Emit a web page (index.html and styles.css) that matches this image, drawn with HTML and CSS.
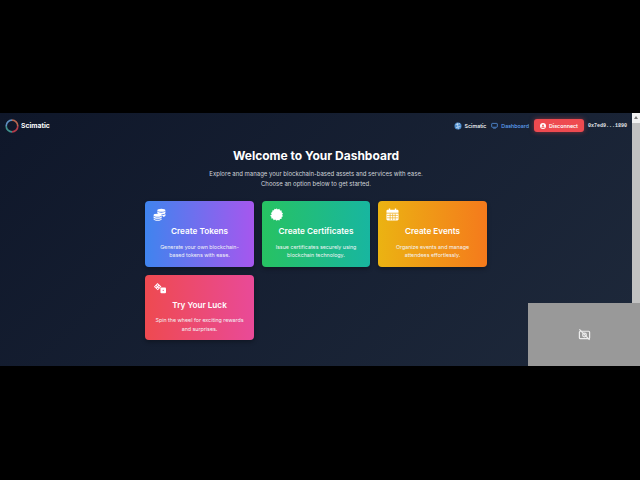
FILE: index.html
```html
<!DOCTYPE html>
<html lang="en">
<head>
    <meta charset="UTF-8">
    <title>Scimatic Dashboard</title>
    <link rel="stylesheet" href="styles.css">
</head>
<body>
    <div class="screen">
        <div class="page">
            <nav class="navbar">
                <div class="brand">
                    <svg class="brand-logo" viewBox="0 0 14 14" width="14" height="14">
                        <path d="M7 1.200A5.800 5.800 0 0 1 12.800 7" fill="none" stroke="#b5654f" stroke-width="1.700"/>
                        <path d="M12.800 7A5.800 5.800 0 0 1 7 12.800" fill="none" stroke="#b23b4a" stroke-width="1.700"/>
                        <path d="M7 12.800A5.800 5.800 0 0 1 1.200 7" fill="none" stroke="#3f8f8c" stroke-width="1.700"/>
                        <path d="M1.200 7A5.800 5.800 0 0 1 7 1.200" fill="none" stroke="#5f8fc0" stroke-width="1.700"/>
                    </svg>
                    <span>Scimatic</span>
                </div>
                <div class="nav-links">
                    <span class="nav-item">
                        <svg viewBox="0 0 10 10" width="8" height="8">
                            <circle cx="5" cy="5" r="4.400" fill="#4f8fd0"/>
                            <path d="M2 3.500 7.500 2M2.500 7 8 5.500M4 1 5.500 9" stroke="#dbe9f7" stroke-width="0.800" fill="none"/>
                        </svg>
                        <span>Scimatic</span>
                    </span>
                    <span class="nav-item nav-active">
                        <svg viewBox="0 0 10 10" width="7" height="7">
                            <rect x="1" y="2" width="8" height="5.500" rx="0.800" fill="none" stroke="#60a5fa" stroke-width="1"/>
                            <path d="M3 9h4" stroke="#60a5fa" stroke-width="0.800"/>
                        </svg>
                        <span>Dashboard</span>
                    </span>
                    <button class="disconnect-btn">
                        <svg viewBox="0 0 10 10" width="6" height="6">
                            <circle cx="5" cy="5" r="5" fill="#fff"/>
                            <circle cx="5" cy="3.800" r="1.500" fill="#ef4444"/>
                            <path d="M2.200 8a2.800 2.200 0 0 1 5.600 0z" fill="#ef4444"/>
                        </svg>
                        Disconnect
                    </button>
                    <span class="wallet">0x7ed9...1890</span>
                </div>
            </nav>

            <main class="content">
                <h1>Welcome to Your Dashboard</h1>
                <p class="intro">Explore and manage your blockchain-based assets and services with ease.<br>Choose an option below to get started.</p>

                <div class="card-grid">
                    <div class="card card-tokens">
                        <svg class="card-icon" viewBox="0 0 14 14" width="13" height="13">
                            <g fill="#fff">
                                <ellipse cx="9" cy="2.400" rx="4.400" ry="1.700"/>
                                <path d="M4.600 3.600c.8 1 2.400 1.500 4.400 1.500s3.600-.5 4.400-1.500v1.600c0 1-2 1.700-4.400 1.700S4.600 6.200 4.600 5.200z"/>
                                <path d="M7 7.800c2 .3 5 0 6.400-1.300v1.500c0 .7-1 1.300-2.400 1.500 0-1-1.800-1.500-4-1.700z"/>
                                <ellipse cx="5" cy="7.800" rx="4.400" ry="1.600"/>
                                <path d="M.6 8.800c.8 1 2.400 1.500 4.400 1.500s3.600-.5 4.400-1.500v1.300c0 1-2 1.600-4.400 1.600S.6 11.100.6 10.100z"/>
                                <path d="M.6 11.200c.8 1 2.400 1.400 4.400 1.400s3.600-.4 4.400-1.400v1c0 1-2 1.600-4.400 1.600S.6 13.200.6 12.200z"/>
                            </g>
                        </svg>
                        <h3>Create Tokens</h3>
                        <p>Generate your own blockchain-based tokens with ease.</p>
                    </div>
                    <div class="card card-certs">
                        <svg class="card-icon" viewBox="0 0 14 14" width="13" height="13">
                            <path fill="#fff" d="M7 .4l1.400 1.200 1.700-.7.700 1.700 1.800.2-.1 1.800 1.500 1-.9 1.600.9 1.600-1.500 1 .1 1.800-1.800.2-.7 1.700-1.700-.7L7 13.600l-1.400-1.200-1.700.7-.7-1.700-1.800-.2.1-1.800-1.500-1L1.900 7 1 5.400l1.500-1-.1-1.800 1.800-.2.7-1.700 1.700.7z"/>
                        </svg>
                        <h3>Create Certificates</h3>
                        <p>Issue certificates securely using blockchain technology.</p>
                    </div>
                    <div class="card card-events">
                        <svg class="card-icon" viewBox="0 0 14 14" width="13" height="13">
                            <path fill="#fff" d="M3 .5h1.500v1.500h5V.5H11V2h1.200c.7 0 1.300.6 1.300 1.300V5H.5V3.300C.5 2.600 1.100 2 1.800 2H3zM.5 5.800h13v6.400c0 .7-.6 1.300-1.300 1.300H1.800c-.7 0-1.300-.6-1.300-1.300z"/>
                            <path stroke="#eeaa14" stroke-width="0.700" fill="none" d="M1 8h12M1 10.600h12M4.500 6v7M7.200 6v7M9.900 6v7"/>
                        </svg>
                        <h3>Create Events</h3>
                        <p>Organize events and manage attendees effortlessly.</p>
                    </div>
                    <div class="card card-luck">
                        <svg class="card-icon" viewBox="0 0 14 14" width="13" height="13">
                            <path fill="#fff" d="M4.800 1 9 4.800 5.200 9 1 5.200z"/>
                            <rect x="8" y="6" width="6" height="6" rx="1" fill="#fff"/>
                            <g fill="#f0476f">
                                <circle cx="4.800" cy="3.400" r=".7"/>
                                <circle cx="3.200" cy="5" r=".7"/>
                                <circle cx="6.600" cy="5" r=".7"/>
                                <circle cx="5" cy="6.800" r=".7"/>
                                <circle cx="11" cy="9" r=".7"/>
                            </g>
                        </svg>
                        <h3>Try Your Luck</h3>
                        <p>Spin the wheel for exciting rewards and surprises.</p>
                    </div>
                </div>
            </main>
        </div>

        <div class="scrollbar">
            <div class="scroll-arrow"></div>
            <div class="scroll-thumb"></div>
        </div>

        <div class="camera-tile">
            <svg viewBox="0 0 14 14" width="13" height="13">
                <g fill="none" stroke="#ececec" stroke-width="1.300">
                    <rect x="1.500" y="3.500" width="11" height="8" rx="1"/>
                    <circle cx="7" cy="7.500" r="2"/>
                    <path d="M1.500 1.500 12.500 12.800"/>
                </g>
            </svg>
        </div>
    </div>
</body>
</html>
```

FILE: styles.css
```css
html, body {
    margin: 0;
    height: 100%;
    overflow: hidden;
    background-color: #000;
}
.screen {
    position: relative;
    height: 253px;
    margin-top: 113px;
    overflow: hidden;
    font-family: Inter, "Liberation Sans", sans-serif;
    color: #fff;
    background: linear-gradient(135deg, #0f172a, #1e293b);
}
.page {
    width: 632px;
}
.navbar {
    display: flex;
    justify-content: space-between;
    align-items: center;
    height: 25px;
    padding: 0 5px;
}
.brand {
    display: flex;
    align-items: center;
    gap: 2px;
    font-size: 6.800px;
    font-weight: 700;
}
.nav-links {
    display: flex;
    align-items: center;
    gap: 4px;
    font-size: 5.300px;
    font-weight: 500;
}
.nav-item {
    display: flex;
    align-items: center;
    gap: 3px;
    margin-right: 1px;
}
.nav-active {
    color: #60a5fa;
}
.disconnect-btn {
    display: flex;
    align-items: center;
    gap: 3px;
    height: 13px;
    padding: 0 6px;
    border: none;
    border-radius: 3px;
    background-color: #ee4a50;
    box-shadow: 0 0 5px rgba(239, 68, 68, 0.5);
    color: #fff;
    font-family: inherit;
    font-size: 5.300px;
    font-weight: 600;
}
.wallet {
    font-family: "Liberation Mono", monospace;
    font-size: 5px;
    font-weight: 700;
    color: #e5e7eb;
}
.content {
    display: flex;
    flex-direction: column;
    align-items: center;
}
h1 {
    margin: 10px 0 0;
    font-size: 12px;
    font-weight: 700;
    line-height: 16px;
}
.intro {
    margin: 5px 0 0;
    font-size: 6px;
    line-height: 10px;
    text-align: center;
    color: #d1d5db;
}
.card-grid {
    display: grid;
    grid-template-columns: repeat(3, 108.500px);
    gap: 8px;
    margin-top: 12px;
}
.card {
    height: 65.500px;
    box-sizing: border-box;
    padding: 7px 8px 0;
    border-radius: 4px;
    box-shadow: 0 2px 4px rgba(0, 0, 0, 0.3);
    text-align: center;
}
.card-icon {
    display: block;
}
.card h3 {
    margin: 5px 0 0;
    font-size: 8.200px;
    font-weight: 600;
    line-height: 11px;
}
.card p {
    margin: 5.500px 0 0;
    font-size: 5.300px;
    line-height: 8.500px;
    color: #f3f4f6;
}
.card-tokens {
    background: linear-gradient(90deg, #3f84ee, #a657ee);
}
.card-certs {
    background: linear-gradient(90deg, #27c262, #18b6a0);
}
.card-events {
    background: linear-gradient(90deg, #ebb312, #f57a1c);
}
.card-luck {
    background: linear-gradient(90deg, #ee4a50, #e94a98);
}
.scrollbar {
    position: absolute;
    top: 0;
    right: 0;
    width: 8px;
    height: 190px;
    background-color: #f1f1f1;
}
.scroll-arrow {
    width: 0;
    height: 0;
    margin: 3px auto 4px;
    border-left: 2px solid transparent;
    border-right: 2px solid transparent;
    border-bottom: 3px solid #777;
}
.scroll-thumb {
    height: 180px;
    background-color: #c1c1c1;
}
.camera-tile {
    position: absolute;
    right: 0;
    bottom: 0;
    display: flex;
    align-items: center;
    justify-content: center;
    width: 112px;
    height: 63px;
    background-color: #999;
}
```
